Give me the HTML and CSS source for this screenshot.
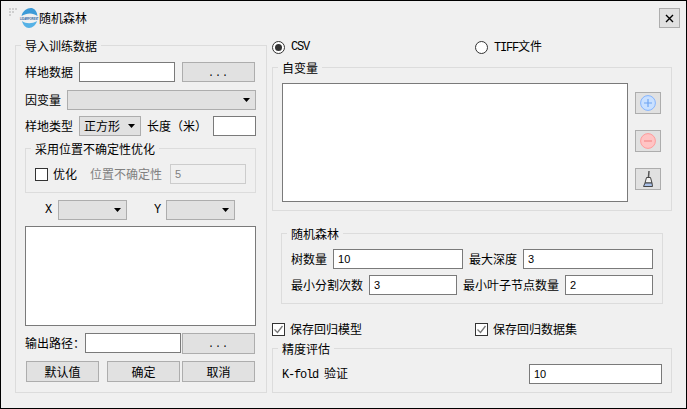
FILE: index.html
```html
<!DOCTYPE html>
<html lang="zh">
<head>
<meta charset="utf-8">
<title>随机森林</title>
<link rel="stylesheet" href="styles.css">
</head>
<body>
<div class="window">
  <header class="titlebar">
    <svg class="grip" width="9" height="9" viewBox="0 0 9 9"><g fill="#cfcfcf"><rect x="0" y="0" width="2" height="2"/><rect x="3" y="0" width="2" height="2"/><rect x="6" y="0" width="2" height="2"/><rect x="0" y="3" width="2" height="2"/><rect x="3" y="3" width="2" height="2"/><rect x="0" y="6" width="2" height="2"/></g></svg>
    <svg class="logo" width="20" height="20" viewBox="0 0 20 20">
      <path d="M2.5 8C4 2 10-1 14 .5C16.5 1.5 18 4 18.5 8C14 4.5 8 4.5 2.5 8Z" fill="#3d9bd8"/>
      <path d="M3 13C7 16 13 16 18 13C17 17 13.5 20 10 20C6.5 20 4 17 3 13Z" fill="#56b2e6"/>
      <rect x="0" y="8.5" width="20" height="4" fill="#f0f0f0"/>
      <text x="1" y="11.6" font-size="2.6" font-weight="700" fill="#1f5f9f" font-family="Liberation Sans">LIDARFOREST</text>
    </svg>
    <span class="window-title">随机森林</span>
    <button class="btn close-btn"><svg width="9" height="9" viewBox="0 0 9 9"><path d="M1 1L8 8M8 1L1 8" stroke="#000" stroke-width="1.4" fill="none"/></svg></button>
  </header>
  <main class="content">
    <section class="group left-group">
      <div class="group-title">导入训练数据</div>
      <div class="row row-first">
        <label>样地数据</label>
        <input class="field w96" type="text">
        <button class="btn browse after-input">...</button>
      </div>
      <div class="row row-next">
        <label>因变量</label>
        <div class="combo combo-wide"><i class="arrow"></i></div>
      </div>
      <div class="row row-near">
        <label>样地类型</label>
        <div class="combo combo-type"><span>正方形</span><i class="arrow"></i></div>
        <label>长度（米）</label>
        <input class="field w43" type="text">
      </div>
      <section class="group sub-group">
        <div class="group-title">采用位置不确定性优化</div>
        <div class="row opt-row row-first">
          <span class="box"></span>
          <label class="opt-label">优化</label>
          <label class="muted">位置不确定性</label>
          <input class="field disabled w76" type="text" value="5" disabled>
        </div>
      </section>
      <div class="row xy-row">
        <span class="mono">X</span>
        <div class="combo combo-xy"><i class="arrow"></i></div>
        <span class="mono y-label">Y</span>
        <div class="combo combo-xy"><i class="arrow"></i></div>
      </div>
      <div class="listbox coord-list"></div>
      <div class="row output-row">
        <label class="output-label">输出路径：</label>
        <input class="field w96" type="text">
        <button class="btn browse output-browse">...</button>
      </div>
      <div class="row action-row">
        <button class="btn action">默认值</button>
        <button class="btn action ok">确定</button>
        <button class="btn action cancel">取消</button>
      </div>
    </section>

    <div class="right">
      <div class="choice-row radio-row">
        <div class="choice"><span class="radio on"></span><span class="mono choice-text">CSV</span></div>
        <div class="choice"><span class="radio"></span><span class="choice-text"><span class="mono">TIFF</span>文件</span></div>
      </div>
      <section class="group var-group">
        <div class="group-title">自变量</div>
        <div class="var-body">
          <div class="listbox var-list"></div>
          <div class="tools">
            <button class="btn tool"><svg width="18" height="18" viewBox="0 0 18 18"><circle cx="9" cy="9" r="7.4" fill="#c9e0ff" stroke="#84b4ff"/><path d="M9 5V13M5 9H13" stroke="#6fa4f2" stroke-width="1.2"/></svg></button>
            <button class="btn tool"><svg width="18" height="18" viewBox="0 0 18 18"><circle cx="9" cy="9" r="7.4" fill="#ffc4c4" stroke="#ff9c9c"/><path d="M5 9H13" stroke="#f58a8a" stroke-width="1.2"/></svg></button>
            <button class="btn tool"><svg width="18" height="18" viewBox="0 0 18 18"><path d="M10 1L9.5 7" stroke="#555" stroke-width="1.5" fill="none"/><path d="M7.5 7.5H11.5L13 13H6Z" fill="#f2f2f2" stroke="#444"/><path d="M6 13H13L13.5 16.5H4.5Z" fill="#a9c0e8" stroke="#444"/></svg></button>
          </div>
        </div>
      </section>
      <section class="group forest-group">
        <div class="group-title">随机森林</div>
        <div class="row row-first">
          <label>树数量</label>
          <input class="field w130" type="text" value="10">
          <label>最大深度</label>
          <input class="field w130" type="text" value="3">
        </div>
        <div class="row row-near">
          <label>最小分割次数</label>
          <input class="field w88" type="text" value="3">
          <label>最小叶子节点数量</label>
          <input class="field w88" type="text" value="2">
        </div>
      </section>
      <div class="choice-row save-row">
        <div class="choice"><span class="box"><svg width="11" height="11" viewBox="0 0 11 11"><path d="M1.5 5.5L4.5 8.5L9.5 2" stroke="#777" stroke-width="1.3" fill="none"/></svg></span><span class="save-text">保存回归模型</span></div>
        <div class="choice"><span class="box"><svg width="11" height="11" viewBox="0 0 11 11"><path d="M1.5 5.5L4.5 8.5L9.5 2" stroke="#777" stroke-width="1.3" fill="none"/></svg></span><span class="save-text">保存回归数据集</span></div>
      </div>
      <section class="group eval-group">
        <div class="group-title">精度评估</div>
        <div class="row row-first eval-row">
          <label><span class="mono">K-fold </span>验证</label>
          <input class="field w133" type="text" value="10">
        </div>
      </section>
    </div>
  </main>
</div>
</body>
</html>
```
FILE: styles.css
```css
* { box-sizing: border-box; }
html, body { margin: 0; padding: 0; }
body {
  font: 12px/16px "Noto Sans CJK SC", "Liberation Sans", sans-serif;
  color: #000;
  background: #f0f0f0;
}
.window {
  width: 687px;
  height: 409px;
  border: 1px solid #000;
  background: #f0f0f0;
  overflow: hidden;
}
.titlebar {
  height: 39px;
  display: flex;
  align-items: flex-start;
  padding: 7px 6px 0 8px;
}
.grip { margin-right: 1px; flex: none; }
.logo { flex: none; }
.window-title { line-height: 20px; }
.close-btn {
  margin-left: auto;
  width: 21px;
  height: 20px;
}
.btn {
  display: flex;
  align-items: center;
  justify-content: center;
  padding: 0;
  border: 1px solid #adadad;
  background: #e1e1e1;
  color: #000;
  font: inherit;
  flex: none;
}
.content {
  display: grid;
  grid-template-columns: 252px 400px;
  column-gap: 5px;
  padding-left: 14px;
  align-items: start;
}
.group {
  border: 1px solid #dcdcdc;
  padding: 0 9px;
}
.group-title {
  width: fit-content;
  height: 16px;
  margin: -8px 0 0 -4px;
  padding: 0 4px;
  background: #f0f0f0;
}
.left-group { margin-top: 5px; height: 348px; padding-right: 10px; }
.row { display: flex; align-items: center; gap: 6px; height: 20px; }
.row-first { margin-top: 7px; }
.left-group > .row-first { margin-top: 8px; }
.row-next { margin-top: 8px; }
.row-near { margin-top: 6px; }
label { flex: none; white-space: pre; }
.field {
  height: 20px;
  padding: 0 0 0 4px;
  border: 1px solid #7a7a7a;
  background: #fff;
  color: #000;
  font: 11px/16px "Liberation Sans", sans-serif;
  flex: none;
  outline: none;
}
.field.disabled { border-color: #cccccc; background: #f0f0f0; color: #808080; }
.w43 { width: 43px; }
.w76 { width: 76px; }
.w88 { width: 88px; }
.w96 { width: 96px; }
.w130 { width: 130px; }
.w133 { width: 133px; }
.browse {
  width: 73px;
  height: 20px;
  font: 10px/16px "Liberation Mono", monospace;
  letter-spacing: 1px;
  padding-top: 3px;
}
.after-input { margin-left: 1px; }
.combo {
  height: 20px;
  border: 1px solid #adadad;
  background: #e1e1e1;
  display: flex;
  align-items: center;
  justify-content: space-between;
  padding: 0 5px 0 4px;
  flex: none;
}
.arrow {
  margin-left: auto;
  width: 7px;
  height: 4px;
  background: #000;
  clip-path: polygon(0 0, 100% 0, 50% 100%);
}
.combo-wide { width: 189px; }
.combo-type { width: 62px; }
.combo-xy { width: 69px; }
.sub-group { margin-top: 12px; height: 45px; width: 231px; }
.opt-row { gap: 0; }
.opt-label { margin: 0 13px 0 5px; }
.muted { color: #808080; margin-right: 8px; }
.box {
  width: 13px;
  height: 13px;
  border: 1px solid #333;
  background: #fff;
  display: flex;
  align-items: center;
  justify-content: center;
  flex: none;
}
.mono { font-family: "Liberation Mono", monospace; font-size: 12px; letter-spacing: -1.2px; }
.xy-row { margin-top: 7px; padding-left: 20px; gap: 7px; }
.y-label { margin-left: 20px; margin-right: -1px; }
.listbox { border: 1px solid #7a7a7a; background: #fff; }
.coord-list { height: 100px; margin-top: 6px; }
.output-row { margin-top: 7px; gap: 0; }
.output-browse { margin-left: 1px; height: 21px; }
.action-row { margin-top: 8px; height: 21px; gap: 0; padding-left: 1px; }
.action { width: 73px; height: 21px; }
.ok { margin-left: 8px; }
.cancel { margin-left: 2px; }
.choice-row { display: flex; height: 14px; align-items: center; }
.choice { width: 203px; display: flex; align-items: center; flex: none; }
.radio {
  width: 13px;
  height: 13px;
  border: 1px solid #333;
  border-radius: 50%;
  background: #fff;
  display: flex;
  align-items: center;
  justify-content: center;
  flex: none;
}
.radio.on::after {
  content: "";
  width: 7px;
  height: 7px;
  border-radius: 50%;
  background: #333;
}
.choice-text { margin-left: 6px; }
.save-text { margin-left: 5px; }
.var-group { margin-top: 13px; height: 144px; }
.var-body { display: flex; margin-top: 7px; gap: 7px; }
.var-list { width: 346px; height: 119px; }
.tools { display: flex; flex-direction: column; gap: 16px; margin-top: 9px; }
.tool { width: 26px; height: 22px; }
.forest-group { margin: 22px 0 0 9px; width: 382px; height: 71px; }
.save-row { margin-top: 18px; }
.eval-group { margin-top: 12px; height: 45px; }
.eval-row { justify-content: space-between; }
```
